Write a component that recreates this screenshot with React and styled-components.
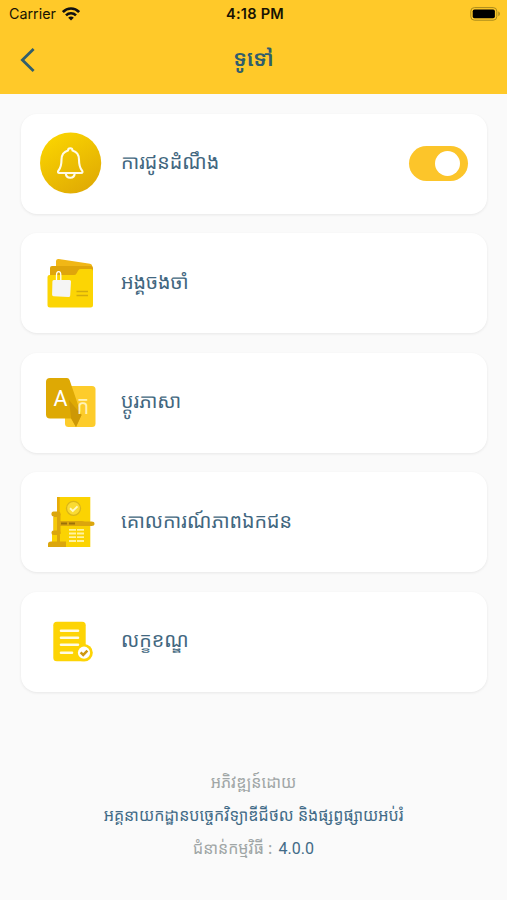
import React, { useState } from "react";
import styled, { createGlobalStyle } from "styled-components";

const GlobalStyle = createGlobalStyle`
  * {
    box-sizing: border-box;
  }
  body {
    margin: 0;
    background: #fafafa;
    font-family: "Noto Sans Khmer", Roboto, "Noto Sans", "DejaVu Sans", sans-serif;
  }
`;

const WifiIcon = () => (
  <svg width="18" height="14" viewBox="0 0 18 14">
    <g fill="none" stroke="#111" strokeWidth="2.6">
      <path d="M0.9 5C5.3 0.4 12.7 0.4 17.1 5" />
      <path d="M4 8.3C6.8 5.5 11.2 5.5 14 8.3" />
    </g>
    <path d="M6.2 10.7C7.8 9.2 10.2 9.2 11.8 10.7L9 13.6Z" fill="#111" />
  </svg>
);

const BatteryIcon = () => (
  <svg width="31" height="14" viewBox="0 0 31 14">
    <rect x="0.8" y="0.6" width="26" height="12.6" rx="3.6" fill="none" stroke="#a98a1c" />
    <rect x="2.7" y="2.5" width="22.2" height="8.8" rx="1.8" fill="#000" />
    <path d="M28.3 4.6C30.4 5.2 30.4 8.6 28.3 9.2Z" fill="#a98a1c" />
  </svg>
);

const BackIcon = () => (
  <svg width="16" height="26" viewBox="0 0 16 26">
    <path d="M13.6 2L2.4 13L13.6 24" fill="none" stroke="#315e6c" strokeWidth="2.8" />
  </svg>
);

const BellIcon = () => (
  <svg width="62" height="62" viewBox="0 0 62 62">
    <defs>
      <linearGradient id="bell" x1="0.2" y1="0" x2="0.8" y2="1">
        <stop offset="0" stopColor="#fbd500" />
        <stop offset="1" stopColor="#dfa904" />
      </linearGradient>
    </defs>
    <circle cx="30.6" cy="31" r="30.6" fill="url(#bell)" />
    <g fill="none" stroke="#fffbe8" strokeWidth="2.1" strokeLinejoin="round">
      <path d="M28 18.6C28 15.5 32.5 15.5 32.5 18.6C36.7 19.8 39 23.4 39 27.8C39 33 39.8 36 42.1 38.7C42.9 39.8 42.5 41 41.2 41H19.3C18 41 17.6 39.8 18.4 38.7C20.7 36 21.5 33 21.5 27.8C21.5 23.4 23.8 19.8 28 18.6Z" />
      <path d="M25.7 41.2C26.2 47.3 34.3 47.3 34.8 41.2" />
    </g>
  </svg>
);

const FolderIcon = () => (
  <svg width="62" height="62" viewBox="0 0 62 62">
    <path d="M16 9Q16.3 6.7 18.7 7L50 11.7Q52 12 52.2 14V20H16Z" fill="#f1b716" />
    <path d="M10 16Q10 14 12 14H51Q53 14 53 16V24H10Z" fill="#dfa50b" />
    <path d="M7.5 25Q7.5 23 9.5 23H34Q35.7 23 36.5 21.5L38.2 18.4Q39 17 40.7 17H51Q53 17 53 19V53Q53 55.5 50.5 55.5H10Q7.5 55.5 7.5 53Z" fill="#fcd504" />
    <path d="M16.5 29V23.5Q16.5 19.7 18.7 19.7Q20.8 19.7 20.8 23.5V32" fill="none" stroke="#fff" strokeWidth="1.3" />
    <path d="M13.8 28H29.5Q31 28 31 29.5L30.2 43.5Q30 45 28.6 45L13.5 44.2Q12 44 12.1 42.5L12.4 29.5Q12.4 28 13.8 28Z" fill="#f5f5f4" />
    <path d="M36.5 39.5H48M36.5 43.5H48" stroke="#d1ab0c" strokeWidth="1.3" />
  </svg>
);

const LanguageIcon = () => (
  <svg width="62" height="62" viewBox="0 0 62 62">
    <rect x="25" y="15" width="30.5" height="41" rx="3.5" fill="#fdcc2b" />
    <path d="M10 7H27Q28.8 7 29.6 9L41.5 44L36 56L31.2 47.5H10Q6 47.5 6 43.5V11Q6 7 10 7Z" fill="#dea904" />
    <path d="M29 29L41.5 44L36 56L31.2 47.5Z" fill="#cd9806" />
    <LatinGlyph x="20.5" y="35.3" textLength="14" lengthAdjust="spacingAndGlyphs">A</LatinGlyph>
    <KhmerGlyph x="43" y="42.5" textLength="12.5" lengthAdjust="spacingAndGlyphs">ក</KhmerGlyph>
  </svg>
);

const PrivacyIcon = () => (
  <svg width="62" height="62" viewBox="0 0 62 62">
    <path d="M17 6H50.3V56H12V40H17Z" fill="#fbd302" />
    <path d="M17 6H19.7V56H17Z" fill="#e7ab08" />
    <g fill="#dba60d">
      <rect x="11.5" y="20.5" width="9" height="5" rx="2" />
      <rect x="13.5" y="23" width="7" height="20" />
      <rect x="11.5" y="39.5" width="9" height="4.6" rx="2" />
      <rect x="17" y="44" width="3" height="8" />
      <path d="M8 56V53Q8 50.5 11 50.5H26V56Z" />
      <path d="M19.5 30H42L45 30.5H51.5Q54.5 30.5 54.5 32.8Q54.5 35 51.5 35H19.5Z" />
    </g>
    <path d="M13.5 26H17V39.5H13.5Z" fill="#f6ca09" />
    <path d="M21 32.5H35" stroke="#9b7109" strokeWidth="1.9" strokeDasharray="6 2" />
    <circle cx="33.5" cy="17.3" r="7" fill="#fadb32" stroke="#d9b519" strokeWidth="1.3" />
    <path d="M30 17.3L32.8 20L37.5 15.3" fill="none" stroke="#fff8c7" strokeWidth="1.9" />
    <path d="M29 38.8H44.5M29 42.5H44.5M29 46.2H44.5M29 50H44.5" stroke="#fff3a0" strokeWidth="1.8" strokeDasharray="7 1" />
  </svg>
);

const TermsIcon = () => (
  <svg width="62" height="62" viewBox="0 0 62 62">
    <rect x="13.3" y="11.8" width="32.4" height="39.4" rx="3.5" fill="#fdd405" />
    <path d="M21 20.8H38M21 27.8H38M21 34.8H38M21 42.7H32" stroke="#fffbe4" strokeWidth="2.6" strokeLinecap="round" />
    <circle cx="44" cy="42.7" r="8.8" fill="#fdd405" />
    <circle cx="44" cy="42.7" r="6.1" fill="#fff" />
    <path d="M40.6 42.4L43.2 44.9L47.4 40.6" fill="none" stroke="#ce9710" strokeWidth="2.5" />
  </svg>
);

const items = [
  { label: "ការជូនដំណឹង", icon: BellIcon, toggle: true },
  { label: "អង្គចងចាំ", icon: FolderIcon },
  { label: "ប្តូរភាសា", icon: LanguageIcon },
  { label: "គោលការណ៍ភាពឯកជន", icon: PrivacyIcon },
  { label: "លក្ខខណ្ឌ", icon: TermsIcon }
];

const App = () => {
  const [enabled, setEnabled] = useState(true);

  return (
    <Screen>
      <GlobalStyle />
      <Header>
        <StatusBar>
          <Carrier>
            Carrier
            <WifiIcon />
          </Carrier>
          <Time>4:18 PM</Time>
          <Battery>
            <BatteryIcon />
          </Battery>
        </StatusBar>
        <NavBar>
          <BackButton aria-label="Back">
            <BackIcon />
          </BackButton>
          <Title>ទូទៅ</Title>
        </NavBar>
      </Header>
      <List>
        {items.map(({ label, icon: ItemIcon, toggle }) => (
          <Card key={label}>
            <ItemIcon />
            <Label>{label}</Label>
            {toggle && (
              <Switch
                role="switch"
                aria-checked={enabled}
                $on={enabled}
                onClick={() => setEnabled(!enabled)}
              >
                <Knob />
              </Switch>
            )}
          </Card>
        ))}
      </List>
      <Footer>
        <FooterLine>អភិវឌ្ឍន៍ដោយ</FooterLine>
        <FooterLine $strong>
          អគ្គនាយកដ្ឋានបច្ចេកវិទ្យាឌីជីថល និងផ្សព្វផ្សាយអប់រំ
        </FooterLine>
        <FooterLine>
          ជំនាន់កម្មវិធី : <Version>4.0.0</Version>
        </FooterLine>
      </Footer>
    </Screen>
  );
};

const Screen = styled.div`
  display: flex;
  flex-direction: column;
  height: 900px;
  background: #fafafa;
  overflow: hidden;
`;

const Header = styled.header`
  height: 94px;
  flex: none;
  background: #ffc929;
`;

const StatusBar = styled.div`
  display: grid;
  grid-template-columns: 1fr auto 1fr;
  align-items: center;
  height: 27px;
  padding: 0 6px 0 9px;
  font-family: Inter, sans-serif;
  color: #171303;
`;

const Carrier = styled.div`
  display: flex;
  align-items: center;
  gap: 6px;
  font-size: 14.3px;
`;

const Time = styled.div`
  font-size: 14.6px;
  font-weight: 600;
  letter-spacing: 0.2px;
`;

const Battery = styled.div`
  display: flex;
  justify-content: flex-end;
`;

const NavBar = styled.div`
  display: grid;
  grid-template-columns: 60px 1fr 60px;
  align-items: center;
  height: 65px;
`;

const BackButton = styled.button`
  display: flex;
  padding: 0 0 0 20px;
  border: 0;
  background: none;
  cursor: pointer;
`;

const Title = styled.h1`
  margin: 0;
  padding-bottom: 4px;
  text-align: center;
  font-size: 21.8px;
  line-height: 30px;
  font-weight: 600;
  color: #315e6c;
`;

const List = styled.main`
  display: flex;
  flex-direction: column;
  gap: 19.6px;
  padding: 19.5px 20px 0 21px;
`;

const Card = styled.section`
  display: flex;
  align-items: center;
  height: 100px;
  padding: 0 19px 1px;
  border-radius: 16px;
  background: #fff;
  box-shadow: 0 1px 3px rgba(0, 0, 0, 0.08);
`;

const Label = styled.span`
  flex: 1;
  margin-left: 19px;
  padding-bottom: 2px;
  font-size: 19.7px;
  line-height: 30px;
  white-space: nowrap;
  color: #426780;
`;

const Switch = styled.button`
  display: flex;
  align-items: center;
  justify-content: ${props => (props.$on ? "flex-end" : "flex-start")};
  width: 59px;
  height: 35px;
  padding: 0 8px;
  border: 0;
  border-radius: 18px;
  background: ${props => (props.$on ? "#fcc52a" : "#d8d8d8")};
  cursor: pointer;
`;

const Knob = styled.span`
  width: 25px;
  height: 25px;
  border-radius: 50%;
  background: #fff;
`;

const Footer = styled.footer`
  display: flex;
  flex-direction: column;
  align-items: center;
  margin-top: 74px;
`;

const FooterLine = styled.div`
  height: 33px;
  font-size: 16.05px;
  line-height: 33px;
  white-space: nowrap;
  color: ${props => (props.$strong ? "#426b87" : "#a0a6a6")};
`;

const Version = styled.span`
  margin-left: 2px;
  font-family: Roboto, sans-serif;
  color: #426b87;
`;

const LatinGlyph = styled.text`
  font-family: Roboto, sans-serif;
  font-size: 22px;
  text-anchor: middle;
  fill: #fff;
`;

const KhmerGlyph = styled.text`
  font-family: "Noto Sans Khmer", sans-serif;
  font-size: 25px;
  text-anchor: middle;
  fill: #fff2b8;
`;

export default App;
